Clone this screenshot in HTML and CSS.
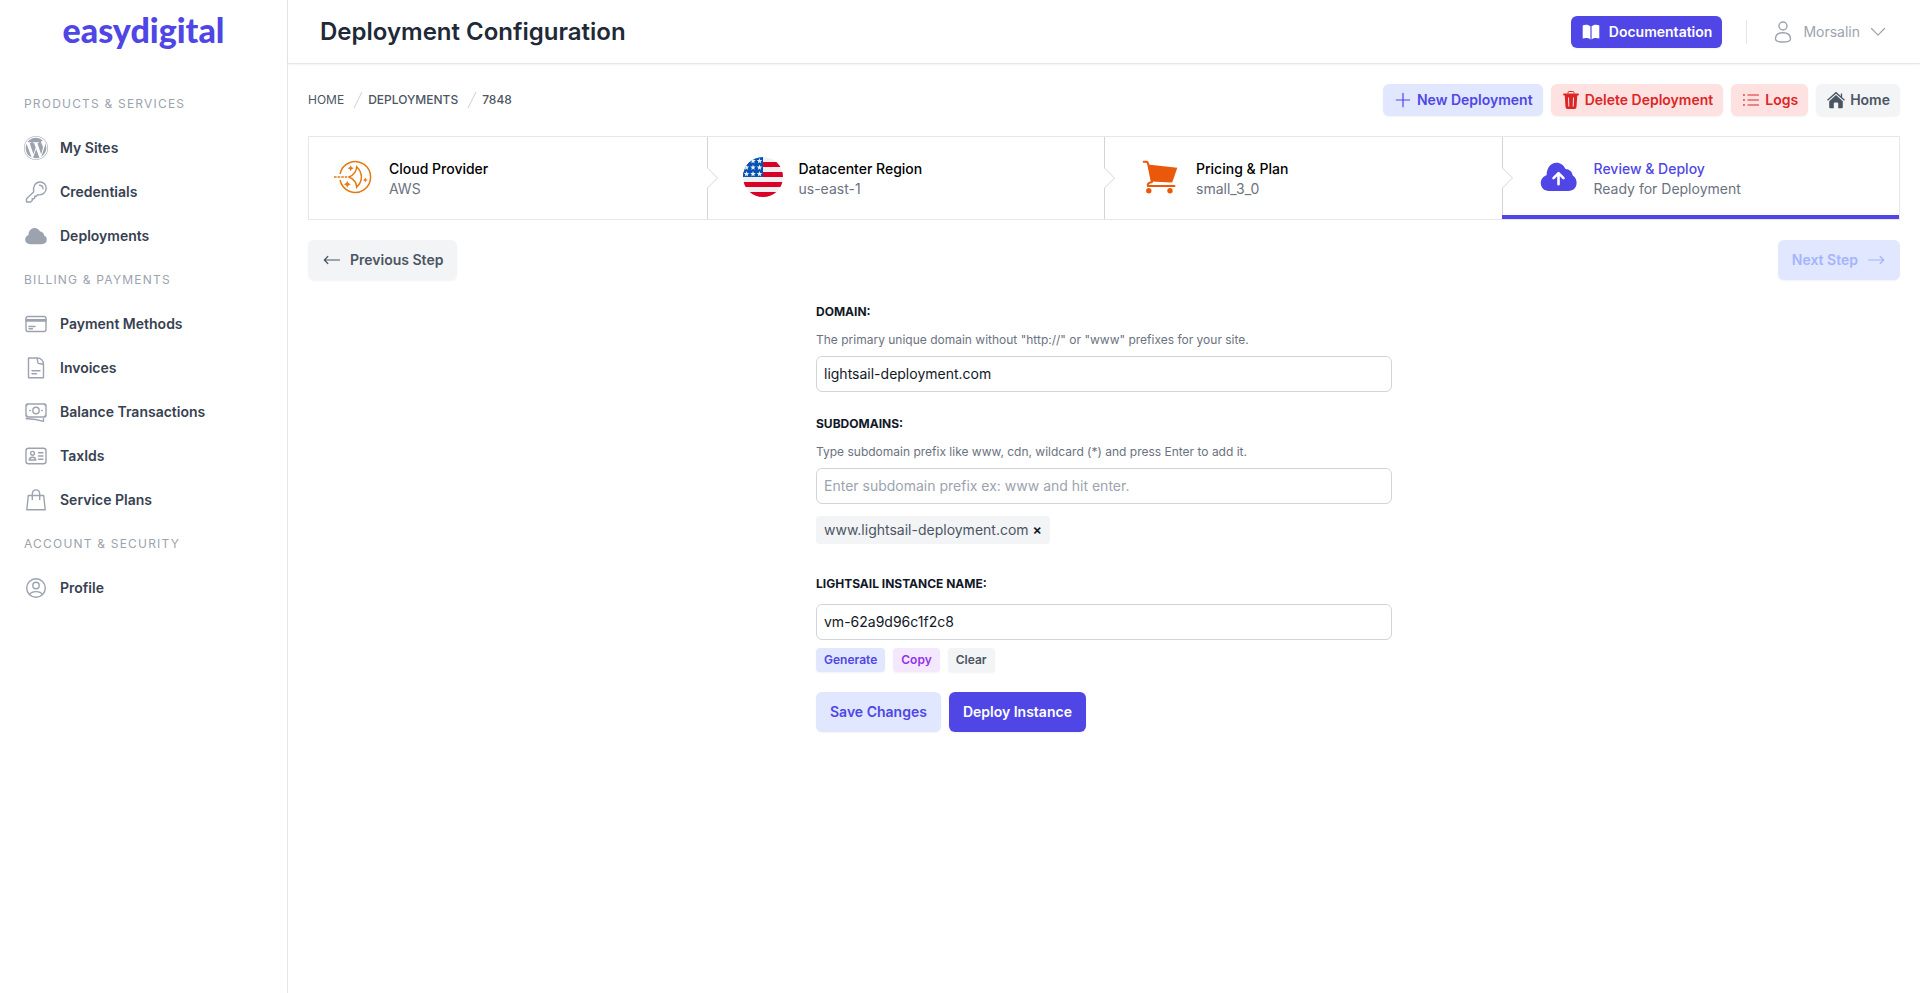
FILE: index.html
```html
<!DOCTYPE html>
<html lang="en">
<head>
    <meta charset="UTF-8">
    <meta name="viewport" content="width=device-width, initial-scale=1">
    <title>Deployment Configuration</title>
    <link rel="stylesheet" href="styles.css">
</head>
<body>
    <aside class="sidebar">
        <a href="#" class="logo">easydigital</a>
        <nav class="side-nav">
            <h2 class="nav-heading">Products &amp; Services</h2>
            <a href="#" class="nav-link">
                <svg class="icon-lg" viewBox="0 0 16 16" fill="currentColor"><path d="M12.633 7.653c0-.848-.305-1.435-.566-1.892l-.08-.13c-.317-.51-.594-.958-.594-1.48 0-.63.478-1.218 1.152-1.218.02 0 .039.002.058.003l.031.003A6.84 6.84 0 0 0 8 1.137 6.86 6.86 0 0 0 2.266 4.23c.16.005.313.009.442.009.717 0 1.828-.087 1.828-.087.37-.022.414.521.044.565 0 0-.371.044-.785.065l2.5 7.434 1.5-4.506-1.07-2.929c-.369-.022-.719-.065-.719-.065-.37-.022-.326-.588.043-.566 0 0 1.134.087 1.808.087.718 0 1.83-.087 1.83-.087.37-.022.413.522.043.566 0 0-.372.043-.785.065l2.48 7.377.684-2.287.054-.173c.27-.86.469-1.495.469-2.046zM1.137 8a6.86 6.86 0 0 0 3.868 6.176L1.73 5.206A6.8 6.8 0 0 0 1.137 8"/><path d="M6.061 14.583 8.121 8.6l2.109 5.78q.02.05.049.094a6.85 6.85 0 0 1-4.218.109m7.96-9.876q.046.328.047.706c0 .696-.13 1.479-.522 2.458l-2.096 6.06a6.86 6.86 0 0 0 2.572-9.224z"/><path d="M0 8c0-4.411 3.589-8 8-8s8 3.589 8 8-3.59 8-8 8-8-3.589-8-8m.367 0c0 4.209 3.424 7.633 7.633 7.633S15.632 12.209 15.632 8C15.632 3.79 12.208.367 8 .367 3.79.367.367 3.79.367 8"/></svg>
                My Sites
            </a>
            <a href="#" class="nav-link">
                <svg class="icon-lg line" viewBox="0 0 24 24"><path d="M9.600 12.100C8.600 6.600 11.600 2 16 2c3.600 0 6.200 2.700 6.200 6.200 0 4.300-3.900 7.300-8.600 6.600L12.400 16.200H10.700V17.900L9.900 18.700H8.200V20.500L6.600 22H2.500V18.800Z"/><path d="M15.500 5.300C17.300 5.300 18.900 6.800 19 8.700"/></svg>
                Credentials
            </a>
            <a href="#" class="nav-link">
                <svg class="icon-lg" viewBox="0 0 24 24" fill="currentColor"><path d="M6.200 20.200C3.300 20.200 1.200 18.200 1.200 15.500c0-2.200 1.300-3.900 3.300-4.500C4.500 6.900 7.100 4 10.500 4c2.500 0 4.500 1.300 5.500 3.600 2.200.1 3.900 1.700 4.200 3.800 1.700.7 2.600 2.200 2.600 4.100 0 2.800-2 4.700-5 4.700Z"/></svg>
                Deployments
            </a>
            <h2 class="nav-heading">Billing &amp; Payments</h2>
            <a href="#" class="nav-link">
                <svg class="icon-lg line" viewBox="0 0 24 24"><rect x="2" y="4.500" width="20" height="15" rx="2"/><path d="M2 7.800H22M2 9H22M5 14.500H11M5 16.700H8.500"/></svg>
                Payment Methods
            </a>
            <a href="#" class="nav-link">
                <svg class="icon-lg line" viewBox="0 0 24 24"><path d="M4.500 2H13C17 2 19.500 4.700 19.500 8.500V21.800H4.500Z"/><path d="M13 2.200C14 3.500 13.300 6.200 14 7.200S17.600 7.200 19.300 8.500M8 14.700H16M8 17.800H12.500"/></svg>
                Invoices
            </a>
            <a href="#" class="nav-link">
                <svg class="icon-lg line" viewBox="0 0 24 24"><rect x="2" y="4" width="20" height="13" rx="1.500"/><circle cx="12" cy="10.500" r="3.200"/><path d="M5.700 10.500H6.200M17.800 10.500H18.300M2.200 18.800Q10 18.300 19.500 21.300V18.700M2.500 5.500 3.500 4.500M21.500 5.500 20.500 4.500M2.500 15.500 3.500 16.500M21.500 15.500 20.500 16.500"/></svg>
                Balance Transactions
            </a>
            <a href="#" class="nav-link">
                <svg class="icon-lg line" viewBox="0 0 24 24"><rect x="2" y="4.300" width="20" height="15.400" rx="2.500"/><circle cx="8.500" cy="9.300" r="1.900"/><path d="M5.200 16C5.400 14.100 6.600 13.200 8.500 13.200S11.600 14.100 11.800 16ZM14.500 8.800H19M14.500 12H19M14.500 15.200H19"/></svg>
                TaxIds
            </a>
            <a href="#" class="nav-link">
                <svg class="icon-lg line" viewBox="0 0 24 24"><path d="M4.300 7.500H19.700L21.200 21.800H2.800ZM8.300 11.500V6C8.300 3.600 9.800 1.900 12 1.900S15.700 3.600 15.700 6V11.500"/></svg>
                Service Plans
            </a>
            <h2 class="nav-heading">Account &amp; Security</h2>
            <a href="#" class="nav-link">
                <svg class="icon-lg line" viewBox="0 0 24 24"><circle cx="12" cy="12" r="9.300"/><circle cx="12" cy="9.500" r="3.200"/><path d="M5.500 18.600C6.700 16.300 9.100 15.600 12 15.600S17.300 16.300 18.500 18.600"/></svg>
                Profile
            </a>
        </nav>
    </aside>

    <div class="page">
        <header class="topbar">
            <h1>Deployment Configuration</h1>
            <div class="topbar-right">
                <a href="#" class="btn btn-sm btn-primary btn-docs">
                    <svg class="icon" viewBox="0 0 20 20" fill="currentColor"><path d="M9.400 4.200C8.300 3.300 6.900 2.700 5 2.700 3.800 2.700 2.600 3 1.700 3.500V16.600C2.700 16.200 3.800 16 5 16c1.700 0 3.200.4 4.400 1.400ZM10.600 4.200C11.700 3.300 13.100 2.700 15 2.700c1.200 0 2.400.3 3.300.8V16.600C17.300 16.200 16.200 16 15 16c-1.700 0-3.200.4-4.400 1.400Z"/></svg>
                    Documentation
                </a>
                <button type="button" class="user-menu">
                    <svg class="icon-lg line" viewBox="0 0 24 24"><circle cx="12" cy="6" r="4"/><path d="M4.500 19C4.500 15.200 7.300 12.700 12 12.700S19.500 15.200 19.500 19C19.500 21.300 16 22 12 22S4.500 21.300 4.500 19Z"/></svg>
                    <span>Morsalin</span>
                    <svg class="icon line" viewBox="0 0 20 20"><path d="M3.500 6.500 10 13.200 16.500 6.500"/></svg>
                </button>
            </div>
        </header>

        <main class="content">
            <div class="toolbar">
                <nav class="breadcrumb" aria-label="Breadcrumb">
                    <a href="#">Home</a>
                    <svg class="slash" viewBox="0 0 20 20" fill="currentColor"><path d="M5.555 17.776l8-16 .894.448-8 16-.894-.448z"/></svg>
                    <a href="#" class="strong">Deployments</a>
                    <svg class="slash" viewBox="0 0 20 20" fill="currentColor"><path d="M5.555 17.776l8-16 .894.448-8 16-.894-.448z"/></svg>
                    <a href="#" class="strong">7848</a>
                </nav>
                <div class="actions">
                    <a href="#" class="btn btn-sm btn-indigo">
                        <svg class="icon line" viewBox="0 0 20 20"><path d="M10 3.300V16.700M3.300 10H16.700"/></svg>
                        New Deployment
                    </a>
                    <button type="button" class="btn btn-sm btn-red">
                        <svg class="icon" viewBox="0 0 20 20" fill="none" stroke="currentColor"><path d="M7 3.500V2.700Q7 1.500 8.200 1.500H11.800Q13 1.500 13 2.700V3.500"/><path d="M3 4.500H17" stroke-width="1.800" stroke-linecap="round"/><path fill="currentColor" stroke="none" fill-rule="evenodd" d="M3.700 5H16.300L15.500 17Q15.400 19 13.500 19H6.500Q4.600 19 4.500 17ZM7 7.500 7.300 16.400H8.300L8 7.500ZM12 7.500 11.700 16.400H12.700L13 7.500Z"/></svg>
                        Delete Deployment
                    </button>
                    <a href="#" class="btn btn-sm btn-red">
                        <svg class="icon line" viewBox="0 0 20 20"><path d="M7 5H17.500M7 10H17.500M7 15H17.500"/><path d="M2.700 5H3.200M2.700 10H3.200M2.700 15H3.200" stroke-width="1.600"/></svg>
                        Logs
                    </a>
                    <a href="#" class="btn btn-sm btn-gray">
                        <svg class="icon" viewBox="0 0 20 20" fill="currentColor"><path d="M10 5.100 16.800 11.200V17.300Q16.800 18.300 15.800 18.300H12.200V13.500Q12.200 12.500 11.200 12.500H8.800Q7.800 12.500 7.800 13.500V18.300H4.200Q3.200 18.300 3.200 17.300V11.200Z"/><path d="M1.500 10.300 10 2.700 18.500 10.300M15.500 3.500V7.300" fill="none" stroke="currentColor" stroke-width="1.300"/></svg>
                        Home
                    </a>
                </div>
            </div>

            <ol class="steps">
                <li class="step">
                    <a href="#">
                        <svg class="step-icon aws" viewBox="0 0 40 40" fill="none" stroke="currentColor"><path d="M7.100 17A15.400 15.400 0 1 1 7.100 23" stroke-width="1.500"/><path d="M1 20H14" stroke-width="1.700" stroke-dasharray="2.600 1"/><path d="M23.700 9.700C23.500 14.300 20.500 18 16 20C20.500 22 23.500 25.700 23.700 30.300C30 24 30 16 23.700 9.700Z" stroke-width="1.500"/><path fill="currentColor" stroke="none" d="M17.700 8.300Q18.100 10.900 20.700 11.300Q18.100 11.700 17.700 14.300Q17.300 11.700 14.700 11.300Q17.300 10.900 17.700 8.300ZM14.300 23.500Q14.800 26.800 18 27.300Q14.800 27.800 14.300 31Q13.800 27.800 10.600 27.300Q13.800 26.800 14.300 23.500ZM32.300 20.500Q32.600 22.700 34.800 23Q32.600 23.300 32.300 25.500Q32 23.300 29.800 23Q32 22.700 32.300 20.500Z"/></svg>
                        <span class="step-text"><span class="step-name">Cloud Provider</span><span class="step-value">AWS</span></span>
                    </a>
                </li>
                <li class="step">
                    <svg class="step-divider" viewBox="0 0 12 82" preserveAspectRatio="none"><path d="M0.500 0V31L10.500 41L0.500 51V82"/></svg>
                    <a href="#">
                        <svg class="step-icon" viewBox="0 0 40 40">
                            <defs>
                                <clipPath id="flag-round"><circle cx="20" cy="20" r="20"/></clipPath>
                                <path id="star" d="M0-2.900.75-.9H2.800L1.150.4 1.750 2.400 0 1.200-1.750 2.400-1.150.4-2.800-.9H-.75Z"/>
                            </defs>
                            <g clip-path="url(#flag-round)">
                                <path fill="#f0f0f0" d="M0 0H40V40H0Z"/>
                                <path fill="#d80027" d="M0 5H40V10H0ZM0 15H40V20H0ZM0 25H40V30H0ZM0 35H40V40H0Z"/>
                                <path fill="#0052b4" d="M0 0H20V20H0Z"/>
                                <g fill="#f0f0f0">
                                    <use href="#star" x="10" y="4"/><use href="#star" x="16.500" y="4"/>
                                    <use href="#star" x="3.500" y="10.500"/><use href="#star" x="10" y="10.500"/><use href="#star" x="16.500" y="10.500"/>
                                    <use href="#star" x="3.500" y="17"/><use href="#star" x="10" y="17"/><use href="#star" x="16.500" y="17"/>
                                </g>
                            </g>
                        </svg>
                        <span class="step-text"><span class="step-name">Datacenter Region</span><span class="step-value">us-east-1</span></span>
                    </a>
                </li>
                <li class="step">
                    <svg class="step-divider" viewBox="0 0 12 82" preserveAspectRatio="none"><path d="M0.500 0V31L10.500 41L0.500 51V82"/></svg>
                    <a href="#">
                        <svg class="step-icon cart" viewBox="0 0 40 40" fill="currentColor"><path d="M7.800 7.500 37.300 10.700 32.600 24.500Q32.200 25.500 31 25.400L11 24.500Z"/><path d="M3.700 4.700H6.300Q7.600 4.700 8 6.200L12 25C8.500 25.500 7.300 27.200 7.800 28.900H34.500" fill="none" stroke="currentColor" stroke-width="2" stroke-linecap="round" stroke-linejoin="round"/><circle cx="8.800" cy="33.700" r="2.700"/><circle cx="30" cy="33.700" r="2.700"/></svg>
                        <span class="step-text"><span class="step-name">Pricing &amp; Plan</span><span class="step-value">small_3_0</span></span>
                    </a>
                </li>
                <li class="step current">
                    <svg class="step-divider" viewBox="0 0 12 82" preserveAspectRatio="none"><path d="M0.500 0V31L10.500 41L0.500 51V82"/></svg>
                    <a href="#" aria-current="step">
                        <svg class="step-icon" viewBox="0 0 40 40"><path fill="currentColor" d="M11 34C6 34 2.800 30.600 2.800 26.300c0-3.900 2.200-6.900 5.800-8C8.800 10.700 12.700 5.700 18.300 5.700c4.200 0 7.600 2.300 9.200 6.300 3.900.1 6.800 2.800 7.200 6.600 2.500 1.400 3.900 4 3.900 7.200 0 5-3.300 8.200-8.300 8.200Z"/><path fill="none" stroke="#fff" stroke-width="2.600" stroke-linecap="round" stroke-linejoin="round" d="M20.500 27.200V16.500M15.500 21.200 20.500 16.200 25.500 21.200"/></svg>
                        <span class="step-text"><span class="step-name">Review &amp; Deploy</span><span class="step-value">Ready for Deployment</span></span>
                    </a>
                </li>
            </ol>

            <div class="step-nav">
                <button type="button" class="btn btn-gray">
                    <svg class="icon line" viewBox="0 0 20 20"><path d="M17.500 10H2.500M5.800 6.500 2.300 10 5.800 13.500"/></svg>
                    Previous Step
                </button>
                <button type="button" class="btn btn-indigo" disabled>
                    Next Step
                    <svg class="icon line" viewBox="0 0 20 20"><path d="M2.500 10H17.500M14.200 6.500 17.700 10 14.200 13.500"/></svg>
                </button>
            </div>

            <form class="deploy-form">
                <div class="field">
                    <label for="domain">Domain:</label>
                    <p class="help" id="domain-help">The primary unique domain without "http://" or "www" prefixes for your site.</p>
                    <input type="text" id="domain" value="lightsail-deployment.com" aria-describedby="domain-help">
                </div>
                <div class="field">
                    <label for="subdomains">Subdomains:</label>
                    <p class="help" id="subdomains-help">Type subdomain prefix like www, cdn, wildcard (*) and press Enter to add it.</p>
                    <input type="text" id="subdomains" placeholder="Enter subdomain prefix ex: www and hit enter." aria-describedby="subdomains-help">
                    <div class="tags">
                        <span class="tag">www.lightsail-deployment.com <button type="button" aria-label="Remove subdomain">×</button></span>
                    </div>
                </div>
                <div class="field">
                    <label for="instance">Lightsail Instance Name:</label>
                    <input type="text" id="instance" value="vm-62a9d96c1f2c8">
                    <div class="mini-buttons">
                        <button type="button" class="btn btn-xs btn-indigo">Generate</button>
                        <button type="button" class="btn btn-xs btn-purple">Copy</button>
                        <button type="button" class="btn btn-xs btn-gray">Clear</button>
                    </div>
                </div>
                <div class="form-buttons">
                    <button type="button" class="btn btn-indigo">Save Changes</button>
                    <button type="submit" class="btn btn-primary">Deploy Instance</button>
                </div>
            </form>
        </main>
    </div>
</body>
</html>
```

FILE: styles.css
```css
:root {
    --indigo: #4f46e5;
    --indigo-light: #e0e7ff;
    --gray-100: #f3f4f6;
    --gray-200: #e5e7eb;
    --gray-300: #d1d5db;
    --gray-400: #9ca3af;
    --gray-500: #6b7280;
    --gray-600: #4b5563;
    --gray-700: #374151;
    --gray-800: #1f2937;
    --gray-900: #111827;
    --shadow: 0 1px 2px rgba(0, 0, 0, 0.05);
}

* {
    box-sizing: border-box;
}

body {
    margin: 0;
    display: flex;
    min-height: 100vh;
    font-family: Inter, sans-serif;
    font-size: 14px;
    line-height: 20px;
    color: var(--gray-900);
    background: #fff;
}

a {
    color: inherit;
    text-decoration: none;
}

h1, h2, p, ol {
    margin: 0;
    padding: 0;
}

button, input {
    font: inherit;
    color: inherit;
}

button {
    cursor: pointer;
}

svg {
    display: block;
    flex-shrink: 0;
}

.icon {
    width: 20px;
    height: 20px;
}

.icon-lg {
    width: 24px;
    height: 24px;
}

.line {
    fill: none;
    stroke: currentColor;
    stroke-width: 1.2;
    stroke-linecap: round;
    stroke-linejoin: round;
}

.icon-lg.line {
    stroke-width: 1.4;
}

/* Sidebar */
.sidebar {
    width: 288px;
    flex-shrink: 0;
    border-right: 1px solid var(--gray-200);
}

.logo {
    display: flex;
    align-items: center;
    justify-content: center;
    height: 64px;
    padding-bottom: 4px;
    font-family: Lato, sans-serif;
    font-size: 34px;
    font-weight: 900;
    line-height: 32px;
    color: var(--indigo);
}

.side-nav {
    display: flex;
    flex-direction: column;
    gap: 4px;
    padding: 20px 24px;
}

.nav-heading {
    font-size: 12px;
    font-weight: 400;
    line-height: 40px;
    letter-spacing: 0.1em;
    text-transform: uppercase;
    color: var(--gray-400);
}

.nav-link {
    display: flex;
    align-items: center;
    gap: 12px;
    height: 40px;
    font-weight: 600;
    color: var(--gray-700);
}

.nav-link svg {
    color: var(--gray-400);
}

/* Top bar */
.page {
    flex: 1;
    min-width: 0;
}

.topbar {
    display: flex;
    align-items: center;
    justify-content: space-between;
    height: 64px;
    padding: 0 32px;
    border-bottom: 1px solid var(--gray-200);
    box-shadow: var(--shadow);
}

.topbar h1 {
    font-size: 24px;
    font-weight: 600;
    line-height: 32px;
    color: var(--gray-800);
}

.topbar-right {
    display: flex;
    align-items: center;
    gap: 24px;
}

.user-menu {
    display: flex;
    align-items: center;
    gap: 8px;
    height: 24px;
    padding: 0 0 0 24px;
    border: 0;
    border-left: 1px solid var(--gray-200);
    background: none;
    color: var(--gray-400);
}

/* Buttons */
.btn {
    display: inline-flex;
    align-items: center;
    gap: 8px;
    height: 40px;
    padding: 0 14px;
    border: 0;
    border-radius: 6px;
    font-weight: 600;
    box-shadow: var(--shadow);
}

.btn-sm {
    gap: 4px;
    height: 32px;
    padding: 0 10px;
}

.btn-xs {
    height: 24px;
    padding: 0 8px;
    border-radius: 4px;
    font-size: 12px;
    line-height: 16px;
}

.btn-docs {
    gap: 8px;
}

.btn-primary {
    background: var(--indigo);
    color: #fff;
}

.btn-indigo {
    background: var(--indigo-light);
    color: var(--indigo);
}

.btn-indigo:disabled {
    color: #a5b4fc;
    cursor: not-allowed;
}

.btn-red {
    background: #fee2e2;
    color: #dc2626;
}

.btn-gray {
    background: var(--gray-100);
    color: var(--gray-600);
}

.btn-purple {
    background: #f3e8ff;
    color: #9333ea;
}

/* Main content */
.content {
    padding: 20px;
}

.toolbar {
    display: flex;
    align-items: center;
    justify-content: space-between;
    margin-bottom: 20px;
}

.breadcrumb {
    display: flex;
    align-items: center;
    font-size: 12px;
    line-height: 16px;
    text-transform: uppercase;
    color: var(--gray-600);
}

.breadcrumb .strong {
    font-weight: 500;
}

.slash {
    width: 20px;
    height: 20px;
    margin-left: 4px;
    color: var(--gray-300);
}

.actions {
    display: flex;
    gap: 8px;
}

/* Steps */
.steps {
    display: flex;
    list-style: none;
    border: 1px solid var(--gray-200);
}

.step {
    position: relative;
    flex: 1;
}

.step a {
    display: flex;
    gap: 16px;
    padding: 20px 24px 20px 36px;
}

.step:first-child a {
    padding-left: 24px;
}

.step-divider {
    position: absolute;
    top: 0;
    left: 0;
    width: 12px;
    height: 100%;
    fill: none;
    stroke: var(--gray-300);
}

.step-icon {
    width: 40px;
    height: 40px;
}

.step-text {
    display: flex;
    flex-direction: column;
    padding-top: 2px;
}

.step-name {
    font-weight: 500;
    color: #000;
}

.step-value {
    color: var(--gray-500);
}

.aws {
    color: #e47911;
}

.cart {
    color: #ea580c;
}

.current {
    color: var(--indigo);
}

.current .step-name {
    color: var(--indigo);
}

.current::after {
    content: "";
    position: absolute;
    right: 0;
    bottom: 0;
    left: 0;
    height: 4px;
    background: var(--indigo);
}

.step-nav {
    display: flex;
    justify-content: space-between;
    margin-top: 20px;
}

/* Form */
.deploy-form {
    max-width: 576px;
    margin: 24px auto 0;
}

.field {
    margin-bottom: 24px;
}

.field label {
    display: block;
    margin-bottom: 12px;
    font-size: 12px;
    font-weight: 700;
    line-height: 16px;
    text-transform: uppercase;
}

.help {
    margin-bottom: 8px;
    font-size: 12px;
    line-height: 16px;
    color: var(--gray-500);
}

.field input {
    display: block;
    width: 100%;
    height: 36px;
    padding: 0 7px 2px;
    border: 1px solid var(--gray-300);
    border-radius: 6px;
    background: #fff;
}

.field input::placeholder {
    color: var(--gray-400);
    opacity: 1;
}

.tags {
    display: flex;
    gap: 8px;
    padding: 12px 0 8px;
}

.tag {
    display: flex;
    align-items: center;
    gap: 4px;
    height: 28px;
    padding: 0 8px;
    border-radius: 4px;
    background: var(--gray-100);
    color: var(--gray-600);
}

.tag button {
    padding: 0;
    border: 0;
    background: none;
    font-weight: 600;
    color: var(--gray-900);
}

.mini-buttons {
    display: flex;
    gap: 8px;
    margin-top: 8px;
}

.form-buttons {
    display: flex;
    gap: 8px;
    margin-top: -4px;
}
```
